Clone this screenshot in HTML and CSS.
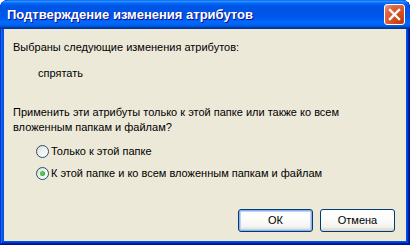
FILE: index.html
```html
<!DOCTYPE html>
<html lang="ru">
<head>
<meta charset="utf-8">
<link rel="stylesheet" href="styles.css">
</head>
<body>
<div class="window">
  <div class="titlebar">
    <span class="title">Подтверждение изменения атрибутов</span>
    <span class="close">
      <svg width="13" height="13" viewBox="0 0 13 13"><path d="M2 2 L11 11 M11 2 L2 11" stroke="#fff" stroke-width="2.4" stroke-linecap="square"/></svg>
    </span>
  </div>
  <div class="content">
    <p class="line first">Выбраны следующие изменения атрибутов:</p>
    <p class="line attr">спрятать</p>
    <p class="question">Применить эти атрибуты только к этой папке или также ко всем вложенным папкам и файлам?</p>
    <div class="options">
      <label class="option"><span class="radio"></span>Только к этой папке</label>
      <label class="option"><span class="radio checked"></span>К этой папке и ко всем вложенным папкам и файлам</label>
    </div>
    <div class="buttons">
      <span class="btn default">ОК</span>
      <span class="btn">Отмена</span>
    </div>
  </div>
</div>
</body>
</html>
```
FILE: styles.css
```css
html, body {
  margin: 0;
  padding: 0;
  background: #fff;
}
.window {
  width: 410px;
  height: 245px;
  box-sizing: border-box;
  display: flex;
  flex-direction: column;
  background: #0054e3;
  border-radius: 8px 8px 0 0;
  box-shadow: inset -1px -1px #00138c, inset 1px 1px #0831d9, inset -2px -2px #001ea0, inset 2px 2px #166aee, inset -3px -3px #003bda, inset 3px 3px #0855dd;
  padding: 0 4px 4px 4px;
  overflow: hidden;
}
.titlebar {
  height: 29px;
  margin: 0 -4px;
  padding: 0 4px 0 7px;
  display: flex;
  align-items: center;
  justify-content: space-between;
  border-radius: 8px 8px 0 0;
  background: linear-gradient(to bottom, #0058ee 0%, #3593ff 4%, #288eff 6%, #127dff 8%, #036ffc 10%, #0262ee 14%, #0057e5 20%, #0054e3 24%, #0055eb 56%, #005bf5 66%, #026afe 76%, #0062ef 86%, #0052d6 92%, #0040ab 94%, #003092 100%);
}
.title {
  font-family: "Liberation Sans", Arial, sans-serif;
  font-weight: bold;
  font-size: 13px;
  color: #fff;
  text-shadow: 1px 1px #0f1089;
  letter-spacing: 0;
}
.close {
  width: 21px;
  height: 21px;
  box-sizing: border-box;
  border: 1px solid #fff;
  border-radius: 3px;
  display: flex;
  align-items: center;
  justify-content: center;
  background: radial-gradient(circle at 85% 85%, #c13a12 0%, #da5125 45%, #e16a48 75%, #f0a58c 100%);
  margin-right: 1px;
}
.content {
  flex: 1;
  background: #ece9d8;
  display: flex;
  flex-direction: column;
  padding: 12px 11px 9px 9px;
  font-family: "Liberation Sans", Tahoma, sans-serif;
  font-size: 11px;
  line-height: 13px;
  color: #000;
}
.line {
  margin: 0;
}
.attr {
  margin-top: 13px;
  padding-left: 25px;
}
.question {
  margin: 25px 0 0 0;
  line-height: 15px;
}
.options {
  margin-top: 10px;
  padding-left: 23px;
  display: flex;
  flex-direction: column;
  gap: 9px;
}
.option {
  display: flex;
  align-items: center;
  height: 13px;
}
.radio {
  width: 13px;
  height: 13px;
  box-sizing: border-box;
  border-radius: 50%;
  border: 1px solid #1c5180;
  background: linear-gradient(135deg, #dcd9cf 0%, #f3f2ec 50%, #fff 100%);
  margin-right: 2px;
  display: flex;
  align-items: center;
  justify-content: center;
}
.radio.checked::after {
  content: "";
  width: 5px;
  height: 5px;
  border-radius: 50%;
  background: radial-gradient(circle at 40% 40%, #62d262, #21a121);
}
.buttons {
  margin-top: auto;
  display: flex;
  justify-content: flex-end;
  gap: 7px;
}
.btn {
  width: 75px;
  height: 23px;
  box-sizing: border-box;
  border: 1px solid #003c74;
  border-radius: 3px;
  background: linear-gradient(to bottom, #fff 0%, #fdfdfc 40%, #f4f3ee 80%, #d6d0c5 100%);
  display: flex;
  align-items: center;
  justify-content: center;
  font-size: 11px;
}
.btn.default {
  box-shadow: inset 0 0 0 1px #8fb0e8, inset 0 0 0 2px #bed3f8;
}
```
